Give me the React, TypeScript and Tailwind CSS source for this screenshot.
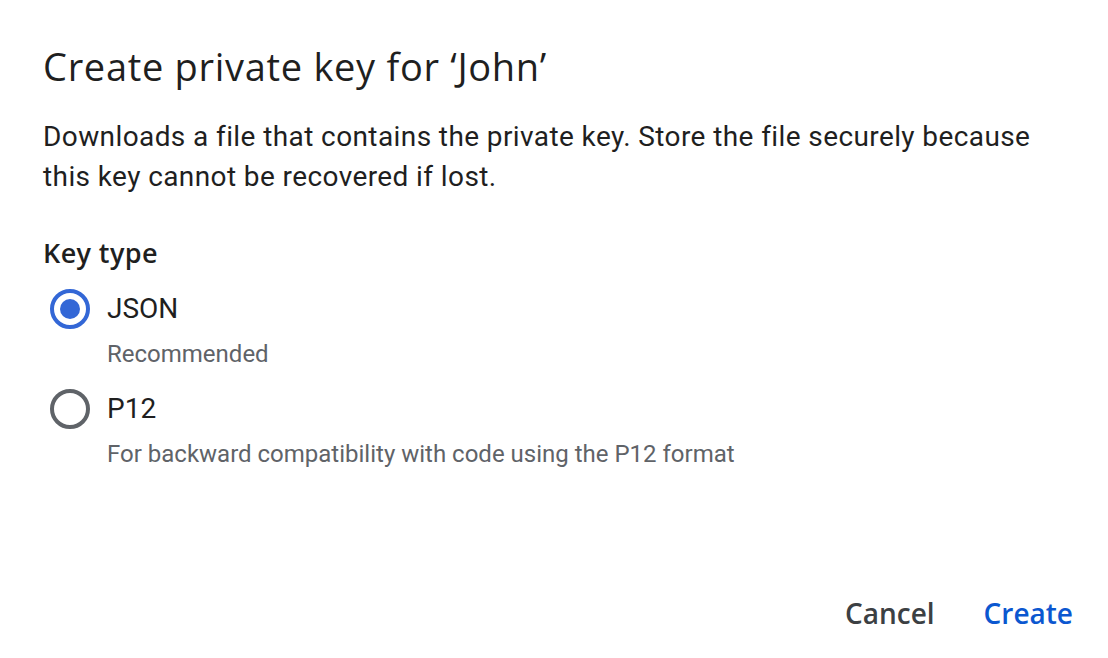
import { useState } from "react";

type KeyType = "json" | "p12";

const options: { id: KeyType; label: string; hint: string }[] = [
  { id: "json", label: "JSON", hint: "Recommended" },
  { id: "p12", label: "P12", hint: "For backward compatibility with code using the P12 format" },
];

function Radio({ checked }: { checked: boolean }) {
  return (
    <span
      className={
        checked
          ? "flex h-[40px] w-[40px] items-center justify-center rounded-full border-[4px] border-[#3367d6]"
          : "flex h-[40px] w-[40px] items-center justify-center rounded-full border-[4px] border-[#5f6368]"
      }
    >
      {checked && <span className="h-[20px] w-[20px] rounded-full bg-[#3367d6]" />}
    </span>
  );
}

export default function App() {
  const [keyType, setKeyType] = useState<KeyType>("json");

  return (
    <div className="flex h-[658px] w-[1108px] flex-col bg-white pl-[43px] pr-[35px] font-['Roboto',sans-serif] text-[#1f1f1f]">
      <h1 className="mt-[44px] font-['Open_Sans',sans-serif] text-[38px] leading-[44px] tracking-[0.7px]">
        Create private key for ‘John’
      </h1>
      <p className="mt-[29px] text-[28px] leading-[40px] tracking-[0.4px]">
        Downloads a file that contains the private key. Store the file securely because
        <br />
        this key cannot be recovered if lost.
      </p>

      <div className="mt-[38px] font-['Open_Sans',sans-serif] text-[27px] font-semibold leading-[36px] tracking-[0.4px]">
        Key type
      </div>

      <div className="mt-[18px] flex flex-col">
        {options.map((opt, i) => (
          <div key={opt.id} className={i === 0 ? "" : "mt-[19px]"}>
            <button
              type="button"
              onClick={() => setKeyType(opt.id)}
              className="flex h-[40px] items-center text-left"
            >
              <span className="ml-[7px] mr-[17px]">
                <Radio checked={keyType === opt.id} />
              </span>
              <span className="text-[28px] leading-[40px]">{opt.label}</span>
            </button>
            <div className="mt-[9px] pl-[64px] text-[24px] leading-[32px] text-[#5f6368]">
              {opt.hint}
            </div>
          </div>
        ))}
      </div>

      <div className="mt-auto mb-[25px] flex justify-end gap-[49px] font-['Open_Sans',sans-serif] text-[28px] font-semibold leading-[40px]">
        <button type="button" className="text-[#3c4043]">
          Cancel
        </button>
        <button type="button" className="text-[#0b57d0]">
          Create
        </button>
      </div>
    </div>
  );
}
